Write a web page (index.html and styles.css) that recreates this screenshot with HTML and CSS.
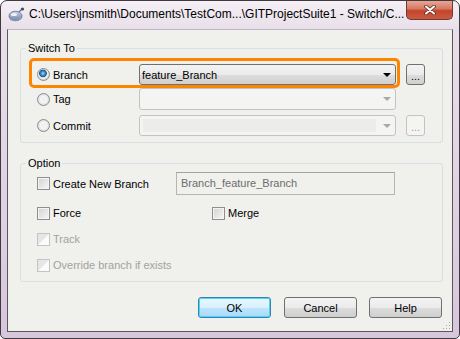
FILE: index.html
```
<!DOCTYPE html>
<html lang="en">
<head>
    <meta charset="UTF-8">
    <title>Switch/Checkout</title>
    <link rel="stylesheet" href="styles.css">
</head>
<body>
    <div class="window">
        <div class="titlebar">
            <svg class="app-icon" width="17" height="15" viewBox="0 0 17 15">
                <defs>
                    <linearGradient id="ball" x1="0" y1="0" x2="0" y2="1">
                        <stop offset="0" stop-color="#c9d4e6"/>
                        <stop offset="1" stop-color="#6d83a8"/>
                    </linearGradient>
                </defs>
                <ellipse cx="7.5" cy="9" rx="6.5" ry="4.8" fill="url(#ball)" stroke="#5a6f92" stroke-width="0.8"/>
                <ellipse cx="6" cy="7.5" rx="3" ry="1.6" fill="#eef2f8"/>
                <path d="M11 5 L14 2" stroke="#6b7b96" stroke-width="1.4"/>
                <circle cx="14.5" cy="2" r="1.6" fill="#3b4b66"/>
                <path d="M2 12.5 Q7.5 15 13 12" stroke="#8fa0bd" stroke-width="1" fill="none"/>
            </svg>
            <span class="title">C:\Users\jnsmith\Documents\TestCom...\GITProjectSuite1 - Switch/C...</span>
            <div class="close">
                <svg width="12" height="10" viewBox="0 0 12 10">
                    <path d="M2 1.5 L10 8.5 M10 1.5 L2 8.5" stroke="#5b2a22" stroke-width="3.6" stroke-linecap="round"/>
                    <path d="M2 1.5 L10 8.5 M10 1.5 L2 8.5" stroke="#ffffff" stroke-width="2" stroke-linecap="round"/>
                </svg>
            </div>
        </div>

        <div class="client">
            <fieldset class="group switch-group">
                <legend>Switch To</legend>

                <div class="choice-row row-branch">
                    <label class="radio"><span class="radio-mark checked"></span>Branch</label>
                    <div class="combo">
                        <span class="combo-text">feature_Branch</span>
                        <span class="arrow"></span>
                    </div>
                    <button class="dots">...</button>
                    <span class="highlight"></span>
                </div>

                <div class="choice-row row-tag">
                    <label class="radio"><span class="radio-mark"></span>Tag</label>
                    <div class="combo disabled">
                        <span class="combo-text"></span>
                        <span class="arrow"></span>
                    </div>
                </div>

                <div class="choice-row row-commit">
                    <label class="radio"><span class="radio-mark"></span>Commit</label>
                    <div class="combo disabled editable">
                        <span class="combo-edit"></span>
                        <span class="arrow"></span>
                    </div>
                    <button class="dots disabled">...</button>
                </div>
            </fieldset>

            <fieldset class="group option-group">
                <legend>Option</legend>

                <div class="option-row first">
                    <label class="check wide"><span class="check-mark"></span>Create New Branch</label>
                    <div class="textbox">Branch_feature_Branch</div>
                </div>

                <div class="option-row">
                    <label class="check force"><span class="check-mark"></span>Force</label>
                    <label class="check"><span class="check-mark"></span>Merge</label>
                </div>

                <div class="option-row">
                    <label class="check disabled"><span class="check-mark"></span>Track</label>
                </div>

                <div class="option-row">
                    <label class="check disabled"><span class="check-mark"></span>Override branch if exists</label>
                </div>
            </fieldset>

            <div class="buttons">
                <button class="btn default">OK</button>
                <button class="btn">Cancel</button>
                <button class="btn">Help</button>
            </div>

            <div class="grip">
                <svg width="8" height="8" viewBox="0 0 8 8">
                    <rect x="6" y="0" width="1" height="1" fill="#a9a9a9"/>
                    <rect x="3" y="3" width="1" height="1" fill="#a9a9a9"/>
                    <rect x="6" y="3" width="1" height="1" fill="#a9a9a9"/>
                    <rect x="0" y="6" width="1" height="1" fill="#a9a9a9"/>
                    <rect x="3" y="6" width="1" height="1" fill="#a9a9a9"/>
                    <rect x="6" y="6" width="1" height="1" fill="#a9a9a9"/>
                </svg>
            </div>
        </div>
    </div>
</body>
</html>
```

FILE: styles.css
```
body {
    margin: 0;
    font-family: "Liberation Sans", Arial, sans-serif;
    font-size: 11px;
    color: #000;
    background: #fff;
}

.window {
    width: 460px;
    height: 339px;
    box-sizing: border-box;
    border: 1px solid #3e3a40;
    border-radius: 7px 7px 5px 5px;
    background: linear-gradient(#f5f0f5, #e9dfea 28px, #d8c6dc);
    display: flex;
    flex-direction: column;
}

.titlebar {
    height: 28px;
    display: flex;
    align-items: flex-start;
    padding-left: 7px;
}

.app-icon {
    margin-top: 6px;
    flex-shrink: 0;
}

.title {
    margin-top: 5px;
    margin-left: 4px;
    font-size: 12px;
    line-height: 16px;
    white-space: nowrap;
}

.close {
    margin-left: auto;
    margin-right: 6px;
    width: 47px;
    height: 19px;
    box-sizing: border-box;
    border: 1px solid #6a3a35;
    border-top: none;
    border-radius: 0 0 5px 5px;
    background: linear-gradient(#e8a695, #d67b65 42%, #c4452e 54%, #cb5a3f);
    display: flex;
    align-items: center;
    justify-content: center;
    flex-shrink: 0;
}

.client {
    margin: 0 6px 6px;
    flex: 1;
    position: relative;
    background: #f0f0ed;
    border: 1px solid #5a565c;
    border-top-color: #bdb5bf;
    display: flex;
    flex-direction: column;
}

.group {
    margin: 0 9px 0 12px;
    padding: 0;
    border: 1px solid #d5dfe5;
    border-radius: 3px;
    min-inline-size: 0;
}

.group legend {
    margin-left: -11px;
    padding: 0 2px;
    line-height: 13px;
}

.switch-group {
    margin-top: 12px;
    padding: 9px 0 6px 16px;
}

.choice-row {
    position: relative;
    display: flex;
    align-items: center;
    height: 21px;
}

.row-tag {
    margin-top: 3px;
    height: 22px;
}

.row-commit {
    margin-top: 5px;
}

.radio {
    width: 102px;
    display: flex;
    align-items: center;
}

.radio-mark {
    width: 13px;
    height: 13px;
    box-sizing: border-box;
    border-radius: 50%;
    border: 1px solid #8c8c8c;
    background: radial-gradient(circle at 50% 50%, #ededed 0, #f6f6f6 3px, #d9d9d9 6px);
    margin-right: 3px;
}

.radio-mark.checked {
    background: radial-gradient(circle at 45% 40%, #a9dcfb 0, #3a8ed0 2px, #1b5b92 3.5px, #e2e2e2 4.2px, #f2f2f2 5px, #d6d6d6 6px);
}

.combo {
    position: relative;
    width: 257px;
    height: 100%;
    box-sizing: border-box;
    border: 1px solid #707070;
    border-radius: 3px;
    background: linear-gradient(#f3f3f3, #ebebeb 50%, #dddddd 51%, #cfcfcf);
    display: flex;
    align-items: center;
}

.combo-text {
    padding-left: 2px;
}

.combo .arrow {
    position: absolute;
    right: 4px;
    top: 8px;
    width: 0;
    height: 0;
    border-left: 4px solid transparent;
    border-right: 4px solid transparent;
    border-top: 4px solid #000;
}

.combo.disabled {
    border-color: #c3c3c3;
    background: #f4f4f3;
}

.combo.disabled .arrow {
    border-top-color: #a8a8a8;
}

.combo-edit {
    margin-left: 3px;
    width: 233px;
    height: 13px;
    background: #ececea;
}

.dots {
    margin-left: 10px;
    width: 19px;
    height: 21px;
    box-sizing: border-box;
    padding: 4px 0 0;
    border: 1px solid #707070;
    border-radius: 3px;
    background: linear-gradient(#f3f3f3, #ebebeb 50%, #dddddd 51%, #cfcfcf);
    font-family: "Liberation Sans", Arial, sans-serif;
    font-size: 11px;
    line-height: 11px;
    color: #000;
}

.dots.disabled {
    border-color: #c3c3c3;
    background: #f4f4f3;
    color: #9a9a9a;
}

.highlight {
    position: absolute;
    left: -8px;
    top: -6px;
    width: 371px;
    height: 30px;
    box-sizing: border-box;
    border: 3px solid #ff8400;
    border-radius: 5px;
}

.option-group {
    margin-top: 14px;
    padding: 2px 0 8px 16px;
    display: flex;
    flex-direction: column;
}

.option-row {
    display: flex;
    align-items: center;
    height: 16px;
    margin-top: 10px;
}

.option-row.first {
    height: 23px;
    margin-top: 0;
}

.check {
    display: flex;
    align-items: center;
}

.check.wide {
    width: 139px;
}

.check.force {
    width: 175px;
}

.check-mark {
    width: 13px;
    height: 13px;
    box-sizing: border-box;
    border: 1px solid #8e8f8f;
    box-shadow: inset 0 0 0 1px #f4f4f4;
    background: linear-gradient(135deg, #d2d2d2, #f7f7f7);
    margin-right: 3px;
}

.check.disabled {
    color: #a2a2a2;
}

.check.disabled .check-mark {
    border-color: #c4c4c4;
    box-shadow: none;
    background: linear-gradient(135deg, #e6e6e6 45%, #fbfbfb 55%);
}

.textbox {
    width: 219px;
    height: 23px;
    box-sizing: border-box;
    border: 1px solid #b5b5b5;
    border-top-color: #a3a3a3;
    padding: 0 4px;
    line-height: 21px;
    color: #6d6d6d;
}

.buttons {
    margin: 15px 10px 0 0;
    display: flex;
    justify-content: flex-end;
    gap: 12px;
}

.btn {
    width: 73px;
    height: 21px;
    box-sizing: border-box;
    border: 1px solid #707070;
    border-radius: 3px;
    background: linear-gradient(#f3f3f3, #ebebeb 50%, #dddddd 51%, #cfcfcf);
    font-family: "Liberation Sans", Arial, sans-serif;
    font-size: 11px;
    color: #000;
    padding: 0;
}

.btn.default {
    border-color: #3c7fb1;
    box-shadow: inset 0 0 0 1px #48d7f8;
    background: linear-gradient(#eaf6fd, #d9f0fc 50%, #bee6fd 51%, #a7d9f5);
    margin-right: 1px;
}

.grip {
    position: absolute;
    right: 1px;
    bottom: 1px;
    line-height: 0;
}
```
